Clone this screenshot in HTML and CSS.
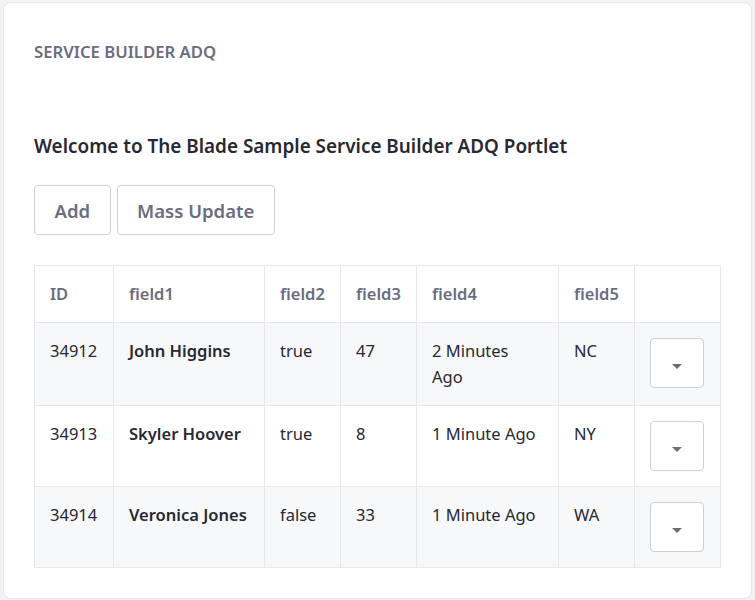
FILE: index.html
```html
<!DOCTYPE html>
<html lang="en">
<head>
<meta charset="utf-8">
<title>Service Builder ADQ</title>
<link rel="stylesheet" href="styles.css">
</head>
<body>
<div class="card">
  <h2 class="portlet-title">SERVICE BUILDER ADQ</h2>
  <h3 class="welcome">Welcome to The Blade Sample Service Builder ADQ Portlet</h3>
  <div class="actions">
    <button class="btn">Add</button>
    <button class="btn">Mass Update</button>
  </div>
  <table class="data">
    <thead>
      <tr>
        <th class="c-id">ID</th>
        <th class="c-f1">field1</th>
        <th class="c-f2">field2</th>
        <th class="c-f3">field3</th>
        <th class="c-f4">field4</th>
        <th class="c-f5">field5</th>
        <th class="c-act"></th>
      </tr>
    </thead>
    <tbody>
      <tr class="odd">
        <td>34912</td>
        <td class="name">John Higgins</td>
        <td>true</td>
        <td>47</td>
        <td>2 Minutes Ago</td>
        <td>NC</td>
        <td><button class="dd"><span class="caret"></span></button></td>
      </tr>
      <tr>
        <td>34913</td>
        <td class="name">Skyler Hoover</td>
        <td>true</td>
        <td>8</td>
        <td>1 Minute Ago</td>
        <td>NY</td>
        <td><button class="dd"><span class="caret"></span></button></td>
      </tr>
      <tr class="odd">
        <td>34914</td>
        <td class="name">Veronica Jones</td>
        <td>false</td>
        <td>33</td>
        <td>1 Minute Ago</td>
        <td>WA</td>
        <td><button class="dd"><span class="caret"></span></button></td>
      </tr>
    </tbody>
  </table>
</div>
</body>
</html>
```

FILE: styles.css
```css
html, body {
  margin: 0;
  padding: 0;
}
body {
  background: #f1f2f5;
  font-family: "Noto Sans", "Open Sans", sans-serif;
  color: #272833;
  padding: 2px 3px;
}
.card {
  background: #fff;
  border: 1px solid #e7e7ed;
  border-radius: 8px;
  height: 597px;
  box-sizing: border-box;
  padding: 0 30px;
  display: flex;
  flex-direction: column;
}
.portlet-title {
  margin: 37px 0 0;
  font-size: 16.7px;
  line-height: 24px;
  font-weight: 600;
  color: #6b6c7e;
}
.welcome {
  margin: 69px 0 0;
  font-size: 18.9px;
  line-height: 27px;
  font-weight: 600;
  color: #272833;
}
.actions {
  display: flex;
  gap: 6px;
  margin-top: 25px;
}
.btn {
  height: 50px;
  padding: 0 19.5px;
  background: #fff;
  border: 1px solid #cdced9;
  border-radius: 4px;
  font-family: inherit;
  font-size: 18.5px;
  font-weight: 600;
  color: #6b6c7e;
}
.data {
  margin-top: 30px;
  border-collapse: collapse;
  table-layout: fixed;
  width: 686px;
  font-size: 16.5px;
  line-height: 26px;
}
.data th, .data td {
  box-sizing: border-box;
  border: 1px solid #e7e7ed;
  padding: 15px 15px;
  text-align: left;
  vertical-align: top;
}
.data th {
  font-weight: 600;
  color: #6b6c7e;
  background: #fff;
}
.data td {
  color: #272833;
}
.data tr.odd td {
  background: #f7f8f9;
}
.data td.name {
  font-weight: 600;
}
.c-id { width: 79px; }
.c-f1 { width: 151px; }
.c-f2 { width: 76px; }
.c-f3 { width: 76px; }
.c-f4 { width: 142px; }
.c-f5 { width: 76px; }
.c-act { width: 86px; }
.dd {
  display: flex;
  align-items: center;
  justify-content: center;
  width: 54px;
  height: 50px;
  padding: 0;
  background: #fff;
  border: 1px solid #cdced9;
  border-radius: 4px;
}
.caret {
  display: block;
  width: 0;
  height: 0;
  margin-top: 6px;
  border-left: 5px solid transparent;
  border-right: 5px solid transparent;
  border-top: 5px solid #6b6c7e;
}
```
